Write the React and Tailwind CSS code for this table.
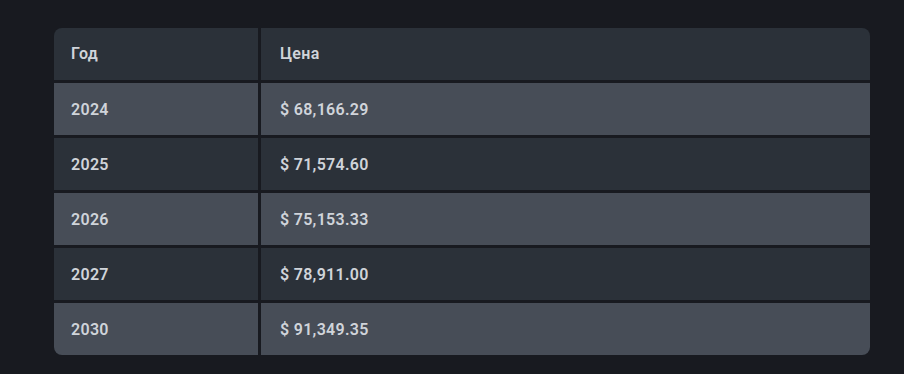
import React from "react";

const rows = [
  { year: "2024", price: "$ 68,166.29" },
  { year: "2025", price: "$ 71,574.60" },
  { year: "2026", price: "$ 75,153.33" },
  { year: "2027", price: "$ 78,911.00" },
  { year: "2030", price: "$ 91,349.35" },
];

const App = () => {
  return (
    <div className="w-[904px] h-[374px] bg-[#181a20] pt-[28px] pl-[54px] pr-[34px]">
      <div
        className="rounded-lg overflow-hidden flex flex-col gap-[3px] text-[16px] font-semibold tracking-[0.3px] text-[#d0d4da]"
        style={{ fontFamily: "Roboto, 'Liberation Sans', sans-serif" }}
      >
        <div className="grid grid-cols-[204px_1fr] gap-[3px] h-[52px]">
          <div className="bg-[#2b3139] flex items-center pl-[17px]">Год</div>
          <div className="bg-[#2b3139] flex items-center pl-[19px]">Цена</div>
        </div>
        {rows.map((row, i) => (
          <div key={row.year} className="grid grid-cols-[204px_1fr] gap-[3px] h-[52px]">
            <div
              className={
                (i % 2 === 0 ? "bg-[#474d57]" : "bg-[#2b3139]") +
                " flex items-center pl-[17px] pt-[2px]"
              }
            >
              {row.year}
            </div>
            <div
              className={
                (i % 2 === 0 ? "bg-[#474d57]" : "bg-[#2b3139]") +
                " flex items-center pl-[19px] pt-[2px]"
              }
            >
              {row.price}
            </div>
          </div>
        ))}
      </div>
    </div>
  );
};

export default App;
